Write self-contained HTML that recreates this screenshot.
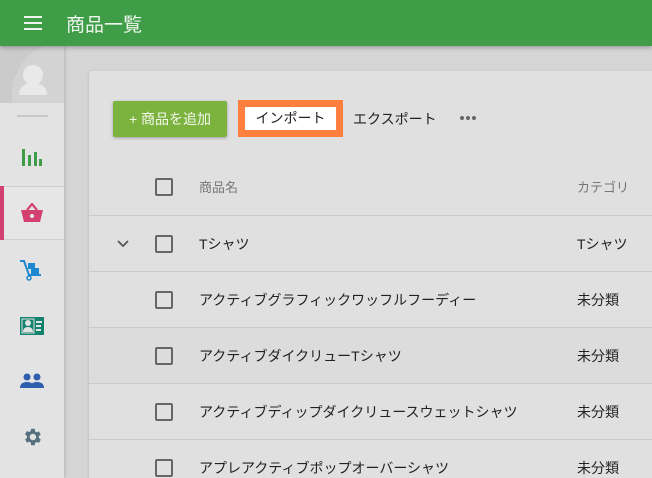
<!DOCTYPE html>
<html><head><meta charset="utf-8"><style>
*{margin:0;padding:0;box-sizing:border-box}
html,body{width:652px;height:478px;overflow:hidden}
body{background:#d5d5d5;font-family:"Liberation Sans","Noto Sans CJK JP",sans-serif;position:relative}
.hdr{position:absolute;left:0;top:0;width:652px;height:46px;background:#3f9d47;box-shadow:0 2px 4px rgba(0,0,0,.25);z-index:3}
.hdr .t{position:absolute;left:66px;top:10px;color:#eef5ee;font-size:19px}
.side{position:absolute;left:0;top:46px;width:64px;height:432px;background:#e3e3e3;box-shadow:1px 0 3px rgba(0,0,0,.15)}
.av{position:absolute;left:0;top:0;width:64px;height:57px;background:#cbcbcb;overflow:hidden}
.ic{position:absolute;left:0;width:64px;display:flex;justify-content:center}
.card{position:absolute;left:89px;top:71px;width:580px;height:407px;background:#e0e0e0;border-radius:3px 3px 0 0;box-shadow:0 1px 3px rgba(0,0,0,.15)}
.btn{position:absolute;left:113px;top:101px;width:114px;height:36px;background:#7cb33e;color:#f3f8ec;font-size:14px;line-height:36px;text-align:center;border-radius:2px;box-shadow:0 1px 3px rgba(0,0,0,.3)}
.imp{position:absolute;left:238px;top:100px;width:105px;height:37px;background:#fff;border:7px solid #ff7f3f;font-size:14px;line-height:23px;text-align:center;color:#222}
.exp{position:absolute;left:353px;top:109px;font-size:14px;color:#222}
.dots{position:absolute;left:460px;top:116px;display:flex;gap:2px}
.dots i{display:block;width:4px;height:4px;border-radius:2px;background:#666}
.row{position:absolute;left:89px;width:563px;height:56px;border-top:1px solid #cacaca;font-size:14px;color:#222}
.cb{position:absolute;left:66px;top:19px;width:18px;height:18px;border:2px solid #666;border-radius:2px}
.nm{position:absolute;left:110px;top:18px}
.ct{position:absolute;left:488px;top:18px}
</style></head><body>
<div class="hdr">
<svg style="position:absolute;left:24px;top:16px" width="18" height="14"><rect y="0" width="18" height="2" fill="#eef5ee"/><rect y="6" width="18" height="2" fill="#eef5ee"/><rect y="12" width="18" height="2" fill="#eef5ee"/></svg>
<div class="t">商品一覧</div></div>
<div class="side">
<div class="av"><svg width="64" height="57"><circle cx="64" cy="48" r="52" fill="#d3d3d3"/><circle cx="33" cy="29" r="10" fill="#e9e9e9"/><path d="M19 49c0-9 7-12 14-12s14 3 14 12z" fill="#e9e9e9"/></svg></div>
<div style="position:absolute;left:17px;top:69px;width:31px;height:2px;background:#c8c8c8"></div>
<div class="ic" style="top:101px"><svg width="22" height="20"><rect x="1" y="2" width="3" height="17" fill="#3f9d47"/><rect x="7" y="8" width="3" height="11" fill="#3f9d47"/><rect x="13" y="5" width="3" height="14" fill="#3f9d47"/><rect x="18" y="12" width="3" height="7" fill="#3f9d47"/></svg></div>
<div style="position:absolute;left:0;top:140px;width:64px;height:54px;background:#e6e6e6;border-top:1px solid #d0d0d0;border-bottom:1px solid #d0d0d0"></div>
<div style="position:absolute;left:0;top:140px;width:4px;height:54px;background:#d2416f"></div>
<div class="ic" style="top:157px"><svg width="24" height="20"><path d="M7 7L12 1L17 7" stroke="#d2416f" stroke-width="2.2" fill="none"/><path d="M1 7h22l-3 12H4z" fill="#d2416f"/><circle cx="12" cy="13" r="2" fill="#e6e6e6"/></svg></div>
<div class="ic" style="top:213px"><svg width="26" height="22"><path d="M1 2h4l5 14h12" stroke="#1e88d0" stroke-width="2" fill="none"/><rect x="9" y="4" width="7" height="6" fill="#1e88d0"/><rect x="12" y="9" width="8" height="6" fill="#1e88d0"/><circle cx="10" cy="19" r="2" stroke="#1e88d0" fill="none" stroke-width="1.5"/></svg></div>
<div class="ic" style="top:271px"><svg width="24" height="18"><rect width="24" height="18" fill="#13836f"/><circle cx="8" cy="6" r="3" fill="#e3e3e3"/><path d="M3 15c0-4 3-5 5-5s5 1 5 5z" fill="#e3e3e3"/><rect x="2" y="2" width="12" height="14" fill="none" stroke="#e3e3e3"/><rect x="16" y="4" width="6" height="2" fill="#e3e3e3"/><rect x="16" y="8" width="5" height="2" fill="#e3e3e3"/><rect x="16" y="12" width="5" height="2" fill="#e3e3e3"/></svg></div>
<div class="ic" style="top:327px"><svg width="24" height="16"><circle cx="7" cy="4" r="3.5" fill="#2e5fae"/><circle cx="17" cy="4" r="3.5" fill="#2e5fae"/><path d="M0 15c0-5 4-6 7-6s7 1 7 6z" fill="#2e5fae"/><path d="M10 15c0-5 4-6 7-6s7 1 7 6z" fill="#2e5fae"/></svg></div>
<div class="ic" style="top:380px"><svg width="22" height="22" viewBox="0 0 24 24"><path fill="#54707e" d="M19.4 13a7.5 7.5 0 0 0 0-2l2.1-1.6-2-3.5-2.5 1a7 7 0 0 0-1.7-1L15 3h-4l-.4 2.6a7 7 0 0 0-1.7 1l-2.5-1-2 3.5L6.6 11a7.5 7.5 0 0 0 0 2l-2.1 1.6 2 3.5 2.5-1a7 7 0 0 0 1.7 1L11 21h4l.4-2.6a7 7 0 0 0 1.7-1l2.5 1 2-3.5zM13 15.5a3.5 3.5 0 1 1 0-7 3.5 3.5 0 0 1 0 7z"/></svg></div>
</div>
<div class="card"></div>
<div class="btn">+ 商品を追加</div>
<div class="imp">インポート</div>
<div class="exp">エクスポート</div>
<div class="dots"><i></i><i></i><i></i></div>
<div class="row" style="top:159px;border-top:none;color:#777;font-size:13px"><div class="cb"></div><div class="nm">商品名</div><div class="ct">カテゴリ</div></div>
<div class="row" style="top:215px"><svg style="position:absolute;left:28px;top:24px" width="12" height="8"><path d="M1 1l5 5 5-5" stroke="#555" stroke-width="1.8" fill="none"/></svg><div class="cb"></div><div class="nm">Tシャツ</div><div class="ct">Tシャツ</div></div>
<div class="row" style="top:271px"><div class="cb"></div><div class="nm">アクティブグラフィックワッフルフーディー</div><div class="ct">未分類</div></div>
<div class="row" style="top:327px;background:#dcdcdc"><div class="cb"></div><div class="nm">アクティブダイクリューTシャツ</div><div class="ct">未分類</div></div>
<div class="row" style="top:383px"><div class="cb"></div><div class="nm">アクティブディップダイクリュースウェットシャツ</div><div class="ct">未分類</div></div>
<div class="row" style="top:439px"><div class="cb"></div><div class="nm">アプレアクティブポップオーバーシャツ</div><div class="ct">未分類</div></div>
</body></html>
